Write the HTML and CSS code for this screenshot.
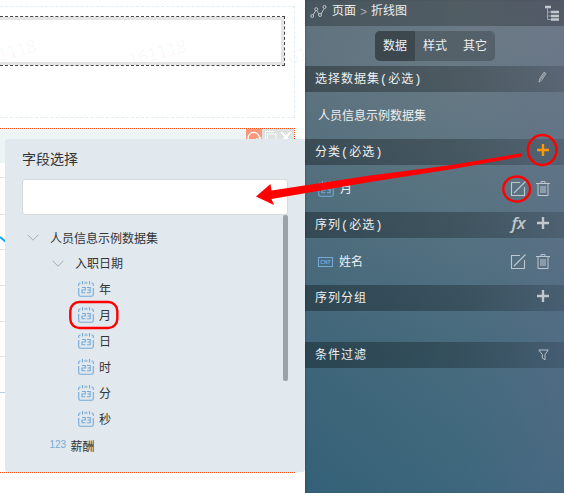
FILE: index.html
```html
<!DOCTYPE html>
<html lang="zh-CN">
<head>
<meta charset="utf-8">
<title>折线图</title>
<link rel="stylesheet" href="styles.css">
</head>
<body>
<svg class="defs" width="0" height="0">
  <defs>
    <symbol id="cal" viewBox="0 0 16 16"><path d="M2.5 2H2Q.7 2 .7 3.5V5M.7 7V13.5Q.7 15.3 2.5 15.3H13.5Q15.3 15.3 15.3 13.5V7M15.3 5V3.5Q15.3 2 14 2H13.5M4.5 0V3.5M8 .5V3M11.5 0V3.5M6 2H6.8M9.3 2H10M4 6.5H7.3V9H4V11.7H7.5M9 6.5H12.2V11.7H9M9.5 9H12" fill="none" stroke="currentColor" stroke-width="1.1"/></symbol>
    <symbol id="chev" viewBox="0 0 12 7"><path d="M.5.7L6 6.2L11.5.7" fill="none" stroke="currentColor"/></symbol>
    <symbol id="edit" viewBox="0 0 16 16"><path d="M10 1.5H1.5V14.5H14.5V6M4 12L15.5.5" fill="none" stroke="currentColor" stroke-width="1.1"/></symbol>
    <symbol id="trash" viewBox="0 0 14 16"><path d="M0 2.5H14M5 2V.6H9V2M2 3V14.5H12V3M5 5V12M7 5V12M9 5V12" fill="none" stroke="currentColor"/></symbol>
    <symbol id="plus" viewBox="0 0 12 12"><path d="M6 0V12M0 6H12" stroke="currentColor" stroke-width="2.4"/></symbol>
  </defs>
</svg>
<div class="app">
  <main class="canvas">
    <section class="slot"><div class="widget"></div></section>
    <section class="chart">
      <div class="chart-head">
        <div class="tools">
          <span class="tool active"><svg width="16" height="16"><path d="M3 12A5.6 5.6 0 1 1 13 11M10 9.5L13.2 11L14.8 8" fill="none" stroke="#fff" stroke-width="1.3"/></svg></span>
          <span class="tool"><svg width="16" height="16"><path d="M3.5 13V2.5H12M5.5 5H14V15H5.5Z" fill="none" stroke="#fff"/></svg></span>
          <span class="tool"><svg width="16" height="16"><path d="M3 3L13 13M13 3L3 13" stroke="#fff" stroke-width="2"/></svg></span>
        </div>
      </div>
      <svg class="plot" width="6" height="309"><path d="M0 14.5H6M0 51.5H6M0 86.5H6M0 122.5H6M0 158.5H6M0 193.5H6" stroke="#e3e3e3"/><path d="M0 229.5H6" stroke="#bccbea"/><path d="M0 74L6 79" stroke="#08a4fc" stroke-width="2"/></svg>
    </section>
  </main>
  <svg class="watermark" width="305" height="493"><g><text transform="translate(-20 67) rotate(-15)">161118</text><text transform="translate(130 67) rotate(-15)">161118</text><text transform="translate(280 67) rotate(-15)">161118</text></g></svg>

  <aside class="popup">
    <h2>字段选择</h2>
    <div class="search"></div>
    <div class="scroller">
      <ul class="tree">
        <li class="root"><svg class="chev"><use href="#chev"/></svg>人员信息示例数据集</li>
        <li class="group"><svg class="chev"><use href="#chev"/></svg>入职日期</li>
        <li class="leaf"><svg class="cal"><use href="#cal"/></svg>年</li>
        <li class="leaf"><svg class="cal"><use href="#cal"/></svg>月</li>
        <li class="leaf"><svg class="cal"><use href="#cal"/></svg>日</li>
        <li class="leaf"><svg class="cal"><use href="#cal"/></svg>时</li>
        <li class="leaf"><svg class="cal"><use href="#cal"/></svg>分</li>
        <li class="leaf"><svg class="cal"><use href="#cal"/></svg>秒</li>
        <li class="num"><span class="digits">123</span>薪酬</li>
      </ul>
      <div class="thumb"></div>
    </div>
  </aside>

  <aside class="panel">
    <header class="crumb">
      <svg width="17" height="14"><g fill="none" stroke="#bec4c9"><path d="M3 10L5.5 6M7 6L9 9M11 9L14 4"/><circle cx="2.2" cy="11" r="1.5"/><circle cx="6.2" cy="4.2" r="1.5"/><circle cx="10" cy="10" r="1.5"/><circle cx="14.5" cy="2" r="1.5"/></g></svg>
      <span class="page">页面</span><span class="gt">&gt;</span><span>折线图</span>
      <svg class="outline" width="15" height="16"><path d="M0 2H6M6 7H14M6 11H14M6 14.5H14" stroke="#c3c8cd" stroke-width="2.3"/><path d="M2.5 3V14.5H6M2.5 7H6M2.5 11H6" fill="none" stroke="#9ba3ab"/></svg>
    </header>
    <nav class="tabs"><span class="tab on">数据</span><span class="tab">样式</span><span class="tab">其它</span></nav>
    <h3 class="bar">选择数据集(必选)<svg class="pencil" width="9" height="12"><path d="M1 11L1.5 8L6 1.2L8 2.5L3.5 9.5Z" fill="none" stroke="#aab1b7"/><path d="M2.3 8.7L6.8 2.2" stroke="#aab1b7"/></svg></h3>
    <div class="value dataset">人员信息示例数据集</div>
    <h3 class="bar">分类(必选)<svg class="plus orange"><use href="#plus"/></svg></h3>
    <div class="value"><svg class="cal"><use href="#cal"/></svg><span class="field">月</span><svg class="edit"><use href="#edit"/></svg><svg class="trash"><use href="#trash"/></svg></div>
    <h3 class="bar">序列(必选)<i class="fx">fx</i><svg class="plus"><use href="#plus"/></svg></h3>
    <div class="value"><span class="cnt">CNT</span><span class="field">姓名</span><svg class="edit"><use href="#edit"/></svg><svg class="trash"><use href="#trash"/></svg></div>
    <h3 class="bar">序列分组<svg class="plus"><use href="#plus"/></svg></h3>
    <div class="empty"></div>
    <h3 class="bar">条件过滤<svg class="funnel" width="11" height="12"><path d="M.8 1H10.2L7 5.5V10.8L4.3 9V5.5Z" fill="none" stroke="#bac3cb"/></svg></h3>
  </aside>

  <svg class="marks" width="564" height="493">
    <path class="arrow" d="M521 153.3Q523.5 154.5 521.5 156.7L450 169.5L370 182L271.5 199L274 205L256 196.5L270.5 184L271.5 190.5L370 175.5L450 165.3Z"/>
    <g fill="none" stroke="#f00" stroke-width="2.4"><ellipse cx="542.2" cy="150" rx="14.3" ry="15"/><ellipse cx="516.7" cy="189" rx="13.4" ry="12.5"/><rect x="70.3" y="302" width="47" height="26" rx="9"/></g>
  </svg>
</div>
</body>
</html>
```
FILE: styles.css
```css
* { box-sizing: border-box; }
body { margin: 0; background: #fff; font: 12px/18px "Liberation Mono", "Noto Sans CJK SC", sans-serif; }
h2, h3, ul { margin: 0; padding: 0; font-weight: 400; list-style: none; }
svg { display: block; flex: none; }
.defs { position: absolute; }
.app { position: relative; display: flex; width: 564px; height: 493px; overflow: hidden; }

.canvas { width: 305px; padding-top: 6px; }
.slot { width: 295px; height: 112px; padding-top: 10px; border: 1px dashed #e2ebfa; border-left: 0; }
.widget { width: 285px; height: 50px; margin-top: -1px; border: 1px dashed #444; border-left: 0; box-shadow: inset -3px 0 #e4e4e4, inset 0 3px #e4e4e4, inset 0 -3px #e4e4e4; }
.chart { width: 295px; height: 345px; margin-top: 10px; border: 1px dotted #ff4a12; border-left: 0; }
.chart-head { height: 34px; background: #eef4f5; }
.tools { display: flex; justify-content: flex-end; }
.tool { width: 16px; height: 16px; background: #dce1e2; }
.tool.active { background: #fc9879; }
.watermark { position: absolute; left: 0; top: 0; }
.watermark text { font: 17.5px "DejaVu Sans", sans-serif; letter-spacing: -1.3px; fill: rgba(0, 0, 0, .035); }

.popup { position: absolute; left: 5px; top: 139px; width: 300px; height: 333px; padding: 10px 17px 0; background: #e1e9ef; border-radius: 3px; color: #333; font-family: "Noto Sans CJK SC", sans-serif; }
.popup h2 { font-size: 14px; line-height: 18px; }
.search { height: 36px; margin-top: 12px; background: #fff; border: 1px solid #d6dadd; border-radius: 3px; }
.scroller { display: flex; justify-content: space-between; }
.tree { padding-top: 10px; }
.tree li { display: flex; align-items: center; height: 26px; }
.tree .root { height: 25px; }
.thumb { width: 5px; height: 166px; background: #9da2a7; border-radius: 2px; }
.chev { width: 12px; height: 7px; color: #a6adb2; }
.root .chev { margin: 0 11px 0 5px; }
.group .chev { margin: 0 11px 0 30px; }
.cal { width: 16px; height: 16px; color: #75a9d6; }
.leaf .cal { margin: 0 5px 0 56px; }
.tree .num { height: 27px; }
.digits { width: 17px; margin: -2px 4px 0 27.5px; color: #75a9d6; font: 10px "Liberation Sans", sans-serif; }

.panel { width: 259px; color: #eef0f1; background: linear-gradient(90deg, rgba(35,80,105,.16), rgba(110,125,140,.12) 60%, rgba(110,115,145,.35)), linear-gradient(172deg, #6b7881 0%, #6a7a83 13%, #587380 38%, #43697c 68%, #34637a 100%); box-shadow: inset 1px 0 2px rgba(0,0,0,.15); }
.crumb { display: flex; align-items: center; height: 26px; padding: 0 4px 3px 5px; background: rgba(0,0,0,.24); }
.page { margin: 1px 0 0 5px; }
.gt { width: 15px; padding: 2px 0 0 4px; color: #a5abb0; }
.gt + span { margin-top: 1px; }
.outline { margin: 2px 0 0 auto; }
.tabs { display: flex; width: 120px; height: 30px; margin: 5px 0 5px 70px; border-radius: 5px; overflow: hidden; background: rgba(0,0,0,.2); }
.tab { width: 40px; padding-top: 2px; line-height: 29px; text-align: center; }
.tab.on { background: rgba(0,0,0,.25); }
.bar { display: flex; align-items: center; height: 26px; padding: 2px 15px 0 10px; background: linear-gradient(90deg, rgba(0,0,0,.32), rgba(0,0,0,.26) 60%, rgba(0,0,0,.14)); font-size: 12px; letter-spacing: 1px; }
.bar svg { margin: -6px 0 0 auto; }
.bar .pencil { margin-right: 2px; }
.bar .funnel { margin: -2px 0 1px auto; }
.plus { width: 12px; height: 12px; color: #c0c8ce; }
.orange { color: #ff9800; }
.bar .fx { margin: -7px 12px 0 auto; color: #c0c8ce; font: italic 600 17px/20px "Open Sans", sans-serif; letter-spacing: -.5px; }
.bar .fx + svg { margin-left: 0; }
.value { display: flex; align-items: center; height: 47px; padding: 1px 15px 0 13px; }
.dataset { padding-top: 2px; }
.field { margin: 2px 0 0 6px; }
.edit { width: 16px; height: 16px; margin-left: auto; color: #c0c8ce; }
.trash { width: 14px; height: 16px; margin: 0 -1px 0 10px; color: #c0c8ce; }
.cnt { width: 15px; height: 10px; border: 1px solid #75a9d6; color: #75a9d6; font: bold 5px/8px "Liberation Sans", sans-serif; text-align: center; }
.empty { height: 31px; }

.marks { position: absolute; left: 0; top: 0; }
.arrow { fill: #f00; }
```
